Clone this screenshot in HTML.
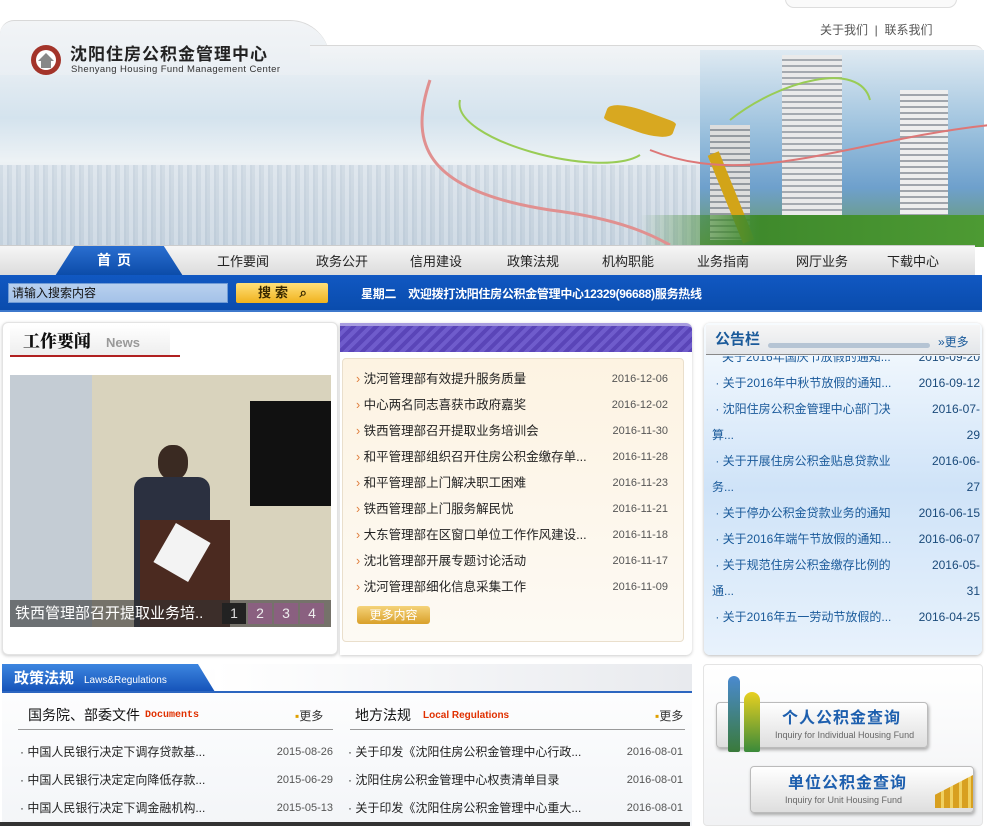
<!DOCTYPE html>
<html><head><meta charset="utf-8"><style>
*{margin:0;padding:0;box-sizing:border-box}
body{width:987px;height:826px;overflow:hidden;background:#fff;font-family:"Liberation Sans","Noto Sans CJK SC",sans-serif;font-size:12px;color:#333;position:relative}
.a{position:absolute}
.cn{font-family:"Liberation Sans","Noto Sans CJK SC","WenQuanYi Zen Hei",sans-serif}
.nav span{position:absolute;top:6px;font-size:13px;color:#222}
.list div{position:absolute;left:0;right:0;height:26px;line-height:26px}
.list .d{position:absolute;right:0;top:0;color:#555;font-family:"Liberation Sans",sans-serif;font-size:11px}
</style></head><body>
<div class="a" style="left:785px;top:-10px;width:172px;height:18px;border:1px solid #ddd;border-radius:10px;background:#fafafa"></div>
<div class="a cn" style="left:820px;top:21px;font-size:12px;color:#555;line-height:18px">关于我们 &nbsp;|&nbsp; 联系我们</div>
<!-- banner -->
<div class="a" style="left:0;top:20px;width:330px;height:60px;border-radius:14px 40px 0 0;background:linear-gradient(#f2f4f6,#e8eef3);border-top:1px solid #d8d8d8"></div>
<div class="a" style="left:310px;top:45px;width:674px;height:40px;background:linear-gradient(#f2f4f6,#e4ecf2);border-top:1px solid #d8d8d8;border-radius:0 10px 0 0"></div>
<div class="a" style="left:0;top:75px;width:984px;height:172px;background:linear-gradient(180deg,#e4ecf2 0%,#d4e3ee 25%,#edf2f5 50%,#d7e0e8 75%,#c4d2de 100%)"></div>
<div class="a" style="left:0;top:165px;width:700px;height:80px;background:repeating-linear-gradient(90deg,#c3d0dc 0 3px,#d8e1ea 3px 7px,#bac8d6 7px 9px);opacity:.6"></div>
<div class="a" style="left:700px;top:50px;width:284px;height:197px;background:linear-gradient(180deg,#dfeaf2,#9dc2de 40%,#6ea0cc 70%,#6a9a5a)"></div>
<div class="a" style="left:782px;top:55px;width:60px;height:185px;background:repeating-linear-gradient(180deg,#eaeaea 0 4px,#a5aab0 4px 6px)"></div>
<div class="a" style="left:900px;top:90px;width:48px;height:150px;background:repeating-linear-gradient(180deg,#eee 0 4px,#a0a5ac 4px 6px)"></div>
<div class="a" style="left:710px;top:125px;width:40px;height:115px;background:repeating-linear-gradient(180deg,#ddd 0 4px,#959aa0 4px 6px)"></div>
<div class="a" style="left:605px;top:110px;width:70px;height:22px;background:#d8a820;border-radius:50% 10% 50% 10%;transform:rotate(20deg)"></div>
<div class="a" style="left:725px;top:150px;width:12px;height:95px;background:#d2a418;transform:rotate(-22deg)"></div>
<div class="a" style="left:640px;top:215px;width:344px;height:32px;background:linear-gradient(90deg,rgba(70,140,50,0),#3f8a2c 35%,#4d9a33)"></div>
<svg class="a" style="left:400px;top:60px" width="590" height="190"><path d="M30 20 C10 80 20 130 150 150 C230 160 260 180 270 185" stroke="#e09090" stroke-width="3" fill="none"/><path d="M60 40 C50 80 200 120 240 95" stroke="#9c5" stroke-width="2" fill="none"/><path d="M250 90 C350 130 450 80 590 65" stroke="#d77" stroke-width="2" fill="none"/><path d="M330 60 C380 20 460 0 470 40" stroke="#9c5" stroke-width="2" fill="none"/></svg>
<svg class="a" style="left:30px;top:44px" width="32" height="32"><circle cx="16" cy="16" r="15" fill="#a3342a"/><circle cx="16" cy="16" r="10" fill="#fff"/><path d="M8 17 L16 9 L24 17 L21 17 L21 24 L11 24 L11 17Z" fill="#888"/></svg>
<div class="a cn" style="left:70px;top:46px;font-size:17px;line-height:18px;font-weight:bold;color:#222;letter-spacing:1px">沈阳住房公积金管理中心</div>
<div class="a" style="left:71px;top:65px;font-size:9.5px;line-height:10px;color:#333;letter-spacing:.4px">Shenyang Housing Fund Management Center</div>
<!-- nav -->
<div class="a" style="left:0;top:245px;width:975px;height:30px;background:linear-gradient(#f6f6f6,#dcdcdc);border-top:1px solid #ccc"></div>
<div class="a" style="left:55px;top:246px;width:128px;height:30px;background:linear-gradient(#2a6ed0,#0b4ba8);clip-path:polygon(15% 0,85% 0,100% 100%,0 100%);border-radius:6px 6px 0 0"></div>
<div class="a cn" style="left:97px;top:250px;color:#fff;font-size:14px;font-weight:bold;letter-spacing:6px">首页</div>
<div class="nav cn a" style="left:0;top:245px;width:975px;height:30px">
<span style="left:217px">工作要闻</span><span style="left:316px">政务公开</span><span style="left:410px">信用建设</span><span style="left:507px">政策法规</span><span style="left:602px">机构职能</span><span style="left:697px">业务指南</span><span style="left:796px">网厅业务</span><span style="left:887px">下载中心</span>
</div>
<div class="a" style="left:0;top:275px;width:982px;height:37px;background:linear-gradient(#1158c2,#0a4cad);border-bottom:2px solid #3d78cc"></div>
<div class="a cn" style="left:8px;top:283px;width:220px;height:20px;background:linear-gradient(#b8d0ee,#a4c2e8);border:1px solid #6f9bd6;font-size:12px;line-height:18px;padding-left:3px;color:#111">请输入搜索内容</div>
<div class="a cn" style="left:236px;top:283px;width:92px;height:20px;background:linear-gradient(#ffe07a,#f0b21e);border-radius:2px;font-size:13px;font-weight:bold;color:#3a2a00;line-height:20px;padding-left:22px;letter-spacing:4px">搜索 ⌕</div>
<div class="a cn" style="left:361px;top:285px;color:#fff;font-size:12px;font-weight:bold;letter-spacing:-.3px">星期二 &nbsp;&nbsp;&nbsp;欢迎拨打沈阳住房公积金管理中心12329(96688)服务热线</div>
<!-- left news -->
<div class="a" style="left:2px;top:322px;width:336px;height:333px;background:#fff;border:1px solid #e3e3e3;border-radius:6px;box-shadow:0 1px 3px #ccc"></div>
<div class="a" style="left:10px;top:325px;width:160px;height:30px;background:linear-gradient(#fff,#eee)"></div>
<div class="a" style="left:10px;top:355px;width:170px;height:2px;background:#b02020"></div>
<div class="a" style="left:23px;top:329px;font-family:'Noto Serif CJK SC',serif;font-size:17px;line-height:22px;font-weight:900;color:#111">工作要闻</div>
<div class="a" style="left:106px;top:335px;font-size:13px;color:#999;font-weight:bold">News</div>
<div class="a" style="left:10px;top:375px;width:321px;height:252px;background:#d9d3bd">
 <div class="a" style="left:0;top:0;width:82px;height:252px;background:#c4ccd4"></div>
 <div class="a" style="left:240px;top:26px;width:81px;height:105px;background:#111"></div>
 <div class="a" style="left:148px;top:70px;width:30px;height:35px;background:#3a2a22;border-radius:45%"></div>
 <div class="a" style="left:124px;top:102px;width:76px;height:150px;background:#2b3040;border-radius:12px 12px 0 0"></div>
 <div class="a" style="left:130px;top:145px;width:90px;height:107px;background:#4b2a20"></div>
 <div class="a" style="left:152px;top:155px;width:40px;height:45px;background:#f3f3f3;transform:rotate(30deg)"></div>
 <div class="a" style="left:0;top:225px;width:321px;height:27px;background:rgba(50,50,50,.6)"></div>
 <div class="a cn" style="left:5px;top:228px;color:#fff;font-size:15px;line-height:21px">铁西管理部召开提取业务培..</div>
 <div class="a" style="left:212px;top:228px;width:24px;height:21px;background:#222;color:#ddd;text-align:center;font-size:14px;line-height:21px">1</div>
 <div class="a" style="left:238px;top:228px;width:24px;height:21px;background:#8a6080;color:#eee;text-align:center;font-size:14px;line-height:21px">2</div>
 <div class="a" style="left:264px;top:228px;width:24px;height:21px;background:#8a6080;color:#eee;text-align:center;font-size:14px;line-height:21px">3</div>
 <div class="a" style="left:290px;top:228px;width:24px;height:21px;background:#8a6080;color:#eee;text-align:center;font-size:14px;line-height:21px">4</div>
</div>
<div class="a" style="left:340px;top:323px;width:352px;height:332px;background:#fff;border-radius:0 6px 6px 0;box-shadow:0 1px 3px #ccc"></div>
<div class="a" style="left:340px;top:323px;width:352px;height:29px;background:repeating-linear-gradient(135deg,#5a45b8 0 4px,#6f5ccc 4px 8px);border-top:3px solid #a89de0;border-radius:0 6px 0 0"></div>
<div class="a" style="left:342px;top:358px;width:342px;height:284px;background:linear-gradient(#fdf3e2,#fdfaf4);border:1px solid #eadfcc;border-radius:4px"></div>
<div class="list cn a" style="left:356px;top:366px;width:312px;font-size:12.5px;color:#222">
<div style="top:0"><span style="color:#e08040">›</span> 沈河管理部有效提升服务质量<span class="d">2016-12-06</span></div>
<div style="top:26px"><span style="color:#e08040">›</span> 中心两名同志喜获市政府嘉奖<span class="d">2016-12-02</span></div>
<div style="top:52px"><span style="color:#e08040">›</span> 铁西管理部召开提取业务培训会<span class="d">2016-11-30</span></div>
<div style="top:78px"><span style="color:#e08040">›</span> 和平管理部组织召开住房公积金缴存单...<span class="d">2016-11-28</span></div>
<div style="top:104px"><span style="color:#e08040">›</span> 和平管理部上门解决职工困难<span class="d">2016-11-23</span></div>
<div style="top:130px"><span style="color:#e08040">›</span> 铁西管理部上门服务解民忧<span class="d">2016-11-21</span></div>
<div style="top:156px"><span style="color:#e08040">›</span> 大东管理部在区窗口单位工作作风建设...<span class="d">2016-11-18</span></div>
<div style="top:182px"><span style="color:#e08040">›</span> 沈北管理部开展专题讨论活动<span class="d">2016-11-17</span></div>
<div style="top:208px"><span style="color:#e08040">›</span> 沈河管理部细化信息采集工作<span class="d">2016-11-09</span></div>
</div>
<div class="a cn" style="left:357px;top:606px;width:73px;height:18px;background:linear-gradient(#f5d37a,#d9a02a);border-radius:3px;color:#fff;font-size:12px;text-align:center;line-height:18px">更多内容</div>
<!-- notice -->
<div class="a" style="left:704px;top:323px;width:278px;height:332px;border-radius:6px;background:linear-gradient(#f7fbfe,#cfe3f8 50%,#e8f2fc);box-shadow:0 1px 3px #bbb"></div>
<div class="a" style="left:706px;top:325px;width:274px;height:30px;background:linear-gradient(#f6f6f6,#e3e6ea);border-bottom:1px solid #888"></div>
<div class="a cn" style="left:715px;top:330px;font-size:15px;line-height:20px;font-weight:bold;color:#1a5a9a">公告栏</div>
<div class="a" style="left:768px;top:343px;width:162px;height:5px;background:#b5c4d4;border-radius:3px"></div>
<div class="a cn" style="left:938px;top:333px;font-size:12px;color:#1a5a9a">»更多</div>
<div class="a cn" style="left:712px;top:356px;width:268px;height:290px;overflow:hidden;font-size:12px;color:#1a5a9a;line-height:26px">
<div style="margin-top:-12px">&nbsp;&nbsp;&nbsp;关于2016年国庆节放假的通知...<span style="float:right;color:#1a4a7a">2016-09-20</span></div>
<div>&nbsp;· 关于2016年中秋节放假的通知...<span style="float:right;color:#1a4a7a">2016-09-12</span></div>
<div>&nbsp;· 沈阳住房公积金管理中心部门决<span style="float:right;color:#1a4a7a">2016-07-</span></div>
<div>算...<span style="float:right;color:#1a4a7a">29</span></div>
<div>&nbsp;· 关于开展住房公积金贴息贷款业<span style="float:right;color:#1a4a7a">2016-06-</span></div>
<div>务...<span style="float:right;color:#1a4a7a">27</span></div>
<div>&nbsp;· 关于停办公积金贷款业务的通知<span style="float:right;color:#1a4a7a">2016-06-15</span></div>
<div>&nbsp;· 关于2016年端午节放假的通知...<span style="float:right;color:#1a4a7a">2016-06-07</span></div>
<div>&nbsp;· 关于规范住房公积金缴存比例的<span style="float:right;color:#1a4a7a">2016-05-</span></div>
<div>通...<span style="float:right;color:#1a4a7a">31</span></div>
<div>&nbsp;· 关于2016年五一劳动节放假的...<span style="float:right;color:#1a4a7a">2016-04-25</span></div>
</div>
<!-- laws -->
<div class="a" style="left:2px;top:664px;width:690px;height:162px;background:linear-gradient(#fff,#f3f5f8)"></div>
<div class="a" style="left:215px;top:664px;width:477px;height:28px;background:linear-gradient(90deg,#fff,#e8eaee)"></div>
<div class="a" style="left:2px;top:664px;width:213px;height:28px;background:linear-gradient(#3d86e0,#1452b8);clip-path:polygon(0 0,92% 0,100% 100%,0 100%)"></div>
<div class="a" style="left:2px;top:691px;width:690px;height:2px;background:#2c66c0"></div>
<div class="a cn" style="left:14px;top:669px;color:#fff;font-size:15px;line-height:20px;font-weight:bold">政策法规</div>
<div class="a" style="left:84px;top:675px;color:#fff;font-size:10px">Laws&amp;Regulations</div>
<div class="a cn" style="left:28px;top:706px;font-size:14px;line-height:18px;color:#111">国务院、部委文件</div>
<div class="a" style="left:145px;top:710px;font-size:10px;color:#e03000;font-weight:bold;font-family:'Liberation Mono',monospace">Documents</div>
<div class="a cn" style="left:295px;top:707px;font-size:12px"><span style="color:#e0a000">▪</span>更多</div>
<div class="a" style="left:18px;top:729px;width:315px;height:1px;background:#999"></div>
<div class="a cn" style="left:355px;top:706px;font-size:14px;line-height:18px;color:#111">地方法规</div>
<div class="a" style="left:423px;top:710px;font-size:10px;color:#e03000;font-weight:bold">Local Regulations</div>
<div class="a cn" style="left:655px;top:707px;font-size:12px"><span style="color:#e0a000">▪</span>更多</div>
<div class="a" style="left:350px;top:729px;width:335px;height:1px;background:#999"></div>
<div class="list cn a" style="left:20px;top:739px;width:313px;font-size:12px;color:#222">
<div style="top:0">· 中国人民银行决定下调存贷款基...<span class="d">2015-08-26</span></div>
<div style="top:28px">· 中国人民银行决定定向降低存款...<span class="d">2015-06-29</span></div>
<div style="top:56px">· 中国人民银行决定下调金融机构...<span class="d">2015-05-13</span></div>
</div>
<div class="list cn a" style="left:348px;top:739px;width:335px;font-size:12px;color:#222">
<div style="top:0">· 关于印发《沈阳住房公积金管理中心行政...<span class="d">2016-08-01</span></div>
<div style="top:28px">· 沈阳住房公积金管理中心权责清单目录<span class="d">2016-08-01</span></div>
<div style="top:56px">· 关于印发《沈阳住房公积金管理中心重大...<span class="d">2016-08-01</span></div>
</div>
<div class="a" style="left:0;top:822px;width:690px;height:4px;background:#333"></div>
<!-- right buttons -->
<div class="a" style="left:703px;top:664px;width:280px;height:162px;background:linear-gradient(#fff,#f1f2f4);border:1px solid #e4e4e4;border-radius:4px"></div>
<div class="a" style="left:716px;top:702px;width:212px;height:46px;border:1px solid #bbb;border-radius:4px;background:linear-gradient(#fff,#dedede);box-shadow:1px 2px 3px #aaa"></div>
<div class="a cn" style="left:782px;top:709px;font-size:16px;line-height:20px;font-weight:bold;color:#1d5fae;letter-spacing:1px">个人公积金查询</div>
<div class="a" style="left:775px;top:730px;font-size:9px;color:#666">Inquiry for Individual Housing Fund</div>
<div class="a" style="left:728px;top:676px;width:12px;height:76px;background:linear-gradient(#4a8ad0,#3a7a3a);border-radius:6px 6px 2px 2px"></div>
<div class="a" style="left:744px;top:692px;width:16px;height:60px;background:linear-gradient(#e8d020,#3a8a3a);border-radius:8px 8px 2px 2px"></div>
<div class="a" style="left:750px;top:766px;width:224px;height:47px;border:1px solid #bbb;border-radius:4px;background:linear-gradient(#fff,#dedede);box-shadow:1px 2px 3px #aaa"></div>
<div class="a cn" style="left:788px;top:774px;font-size:16px;line-height:20px;font-weight:bold;color:#1d5fae;letter-spacing:1px">单位公积金查询</div>
<div class="a" style="left:785px;top:795px;font-size:9px;color:#666">Inquiry for Unit Housing Fund</div>
<div class="a" style="left:935px;top:775px;width:38px;height:33px;background:repeating-linear-gradient(90deg,#d8a020 0 6px,#f0d060 6px 9px);clip-path:polygon(0 60%,100% 0,100% 100%,0 100%)"></div>
</body></html>
